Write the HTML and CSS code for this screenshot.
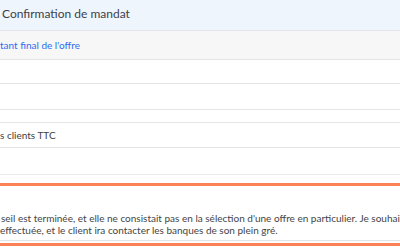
FILE: index.html
```html
<!DOCTYPE html>
<html lang="fr">
<head>
    <meta charset="UTF-8">
    <title>Confirmation de mandat</title>
    <link rel="stylesheet" href="styles.css">
</head>
<body>
    <div class="panel">
        <div class="head">Confirmation de mandat</div>
        <div class="row sub"><a class="link">tant final de l'offre</a></div>
        <div class="row r1"></div>
        <div class="row r2"></div>
        <div class="row r3"></div>
        <div class="row r4">s clients TTC</div>
        <div class="row r5"></div>
        <div class="note">
            <div class="line">seil est terminée, et elle ne consistait pas en la sélection d'une offre en particulier. Je souhaite</div>
            <div class="line">effectuée, et le client ira contacter les banques de son plein gré.</div>
        </div>
        <div class="foot"></div>
    </div>
</body>
</html>
```

FILE: styles.css
```css
body{
    margin: 0;
    background: #fff;
    font-family: Lato, "Noto Sans", sans-serif;
    color: #444;
    overflow: hidden;
}
.panel{
    width: 400px;
    height: 250px;
    overflow: hidden;
}
.head{
    height: 30px;
    line-height: 28px;
    padding-left: 2px;
    background: #eff5fd;
    border-bottom: 1px solid #e2e6eb;
    font-size: 12px;
    color: #3b414a;
}
.row{
    border-bottom: 1px solid #e4e4e4;
    font-size: 10px;
    white-space: nowrap;
}
.sub{
    height: 28px;
    line-height: 28px;
    background: #f7f7f7;
    border-bottom-color: #e6e6e6;
}
.link{
    color: #2e6cf2;
}
.r1{ height: 23px; }
.r2{ height: 25px; }
.r3{ height: 12px; }
.r4{
    height: 24px;
    line-height: 24px;
    color: #3e3e3e;
}
.r5{
    height: 26px;
    border-bottom-color: #ececec;
}
.note{
    margin-top: 8px;
    padding: 26px 0 4px 1px;
    border-top: 3px solid #fd8156;
    border-bottom: 1px solid #e4e4e4;
    font-size: 10px;
    line-height: 12px;
    color: #444;
}
.line{
    white-space: nowrap;
}
.note .line + .line{
    margin-left: -1px;
}
.foot{
    margin-top: 2px;
    border-top: 3px solid #fd8156;
}
```
